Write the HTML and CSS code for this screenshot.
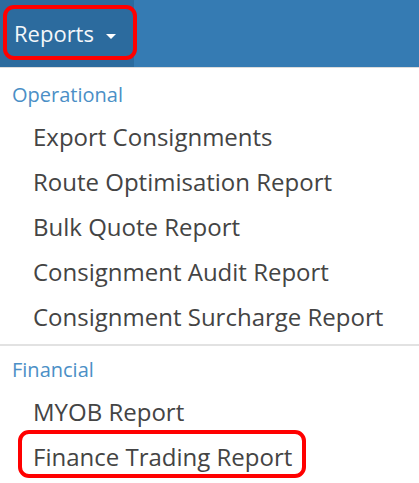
FILE: index.html
```html
<!DOCTYPE html>
<html lang="en">
<head>
    <meta charset="UTF-8">
    <meta name="viewport" content="width=device-width, initial-scale=1.0">
    <title>Reports</title>
    <link rel="stylesheet" href="styles.css">
</head>
<body>
    <nav class="navbar">
        <div class="nav-item open">
            <span class="nav-link">Reports <span class="caret"></span></span>
        </div>
    </nav>
    <ul class="dropdown">
        <li class="dropdown-header">Operational</li>
        <li class="item">Export Consignments</li>
        <li class="item">Route Optimisation Report</li>
        <li class="item">Bulk Quote Report</li>
        <li class="item">Consignment Audit Report</li>
        <li class="item">Consignment Surcharge Report</li>
        <li class="divider"></li>
        <li class="dropdown-header">Financial</li>
        <li class="item">MYOB Report</li>
        <li class="item highlight">Finance Trading Report</li>
    </ul>
</body>
</html>
```

FILE: styles.css
```css
body {
    margin: 0;
    font-family: "Open Sans", "Liberation Sans", sans-serif;
    background-color: #fff;
}

.navbar {
    display: flex;
    height: 67px;
    background-color: #357bb3;
    border-bottom: 1px solid #dcdcdc;
}

.nav-item {
    position: relative;
    display: flex;
    align-items: center;
    width: 134px;
    background-color: #2c6b9e;
}

/* red annotation box */
.nav-item::after {
    content: "";
    position: absolute;
    left: 3px;
    top: 5px;
    width: 126px;
    height: 47px;
    border: 4px solid #f00;
    border-radius: 11px;
}

.nav-link {
    padding-left: 14px;
    color: #f4f7fa;
    font-size: 22px;
    font-weight: 500;
    margin-top: -1px;
}

.caret {
    display: inline-block;
    width: 0;
    height: 0;
    margin-left: 6px;
    vertical-align: middle;
    border-top: 5px solid #fff;
    border-left: 5px solid transparent;
    border-right: 5px solid transparent;
}

.dropdown {
    list-style: none;
    margin: 0;
    padding: 12px 0 0;
}

.dropdown-header {
    padding-left: 12px;
    font-size: 20px;
    line-height: 30px;
    color: #4b8fc6;
    margin-bottom: 4px;
}

.item {
    position: relative;
    padding-left: 33px;
    font-size: 24px;
    line-height: 45px;
    color: #444;
}

.divider {
    height: 2px;
    margin: 5px 0 9px;
    background-color: #e2e2e2;
}

.highlight::after {
    content: "";
    position: absolute;
    left: 18px;
    top: -4px;
    width: 280px;
    height: 40px;
    border: 4px solid #f00;
    border-radius: 11px;
}
```
